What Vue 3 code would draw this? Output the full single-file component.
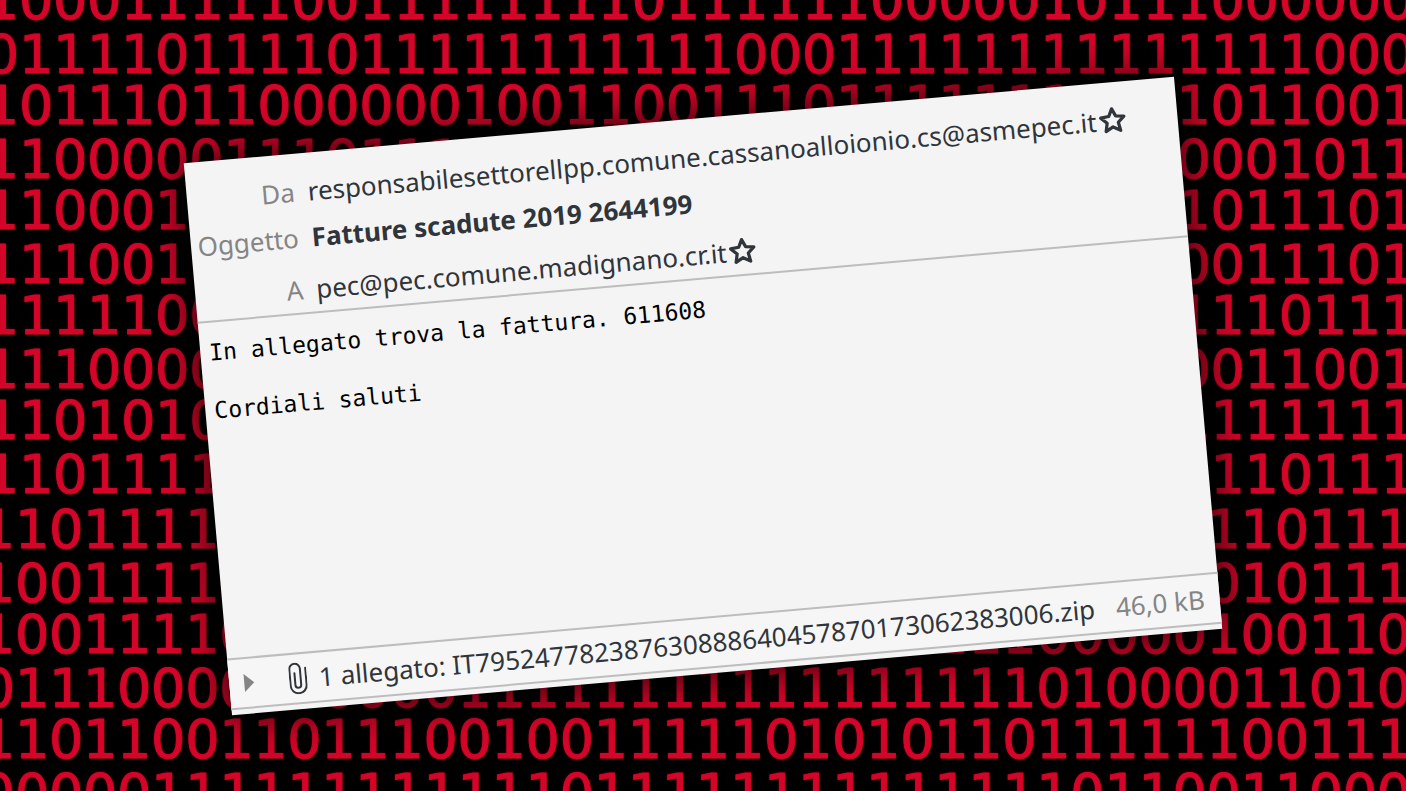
<template>
	<main class="stage">
		<div class="wall" aria-hidden="true">
			<div v-for="(block, b) in blocks" :key="b" class="block">
				<div v-for="(row, r) in block" :key="r" class="digits">
					<span v-for="(digit, d) in row" :key="d">{{ digit }}</span>
				</div>
			</div>
		</div>

		<article class="mail">
			<header class="mail-head">
				<div v-for="field in fields" :key="field.label" class="field">
					<span class="label">{{ field.label }}</span>
					<h1 v-if="field.subject" class="subject">{{ field.value }}</h1>
					<span v-else class="address">{{ field.value }}</span>
					<button v-if="!field.subject" type="button" class="star" :class="{ starred: starred[field.label] }"
						:aria-label="'Contatto ' + field.value" @click="starred[field.label] = !starred[field.label]">
						<svg viewBox="0 0 26 26">
							<path d="M13 2.4 L16.2 9.2 L23.8 10.1 L18.2 15.3 L19.8 23 L13 19.2 L6.2 23 L7.8 15.3 L2.2 10.1 L9.8 9.2 Z" />
						</svg>
					</button>
				</div>
			</header>

			<section class="mail-body">
				<p>In allegato trova la fattura. 611608</p>
				<p>Cordiali saluti</p>
			</section>

			<footer class="attachments">
				<button type="button" class="expander" aria-label="Mostra allegati">
					<svg viewBox="0 0 12 20"><path d="M1 1 L11 10 L1 19 Z" /></svg>
				</button>
				<svg class="clip" viewBox="0 0 18 32">
					<path d="M17 6 V23 A8 8 0 0 1 1 23 V6.5 A5.3 5.3 0 0 1 11.6 6.5 V22.5 A2.9 2.9 0 0 1 5.8 22.5 V10.5" />
				</svg>
				<span class="file">1 allegato: <a href="#">{{ fileName }}</a></span>
				<span class="size">46,0 kB</span>
			</footer>
		</article>
	</main>
</template>

<script setup>
import { reactive } from 'vue'

const fileName = 'IT795247782387630888640457870173062383006.zip'

const starred = reactive({})

const fields = [
	{ label: 'Da', value: 'responsabilesettorellpp.comune.cassanoalloionio.cs@asmepec.it' },
	{ label: 'Oggetto', value: 'Fatture scadute 2019 2644199', subject: true },
	{ label: 'A', value: 'pec@pec.comune.madignano.cr.it' },
]

const ones = (n) => '1'.repeat(n)

const blocks = [
	[
		'100011111001111' + '1111' + '0' + '111111' + '00000' + '10111000000',
		'01111011110' + ones(11) + '000' + ones(14) + '000',
		'10111011000000' + '10011001110' + ones(11) + '011001',
		'1100000111011' + ones(22) + '0001011',
		'110001' + ones(29) + '1011101',
		'111001' + ones(29) + '0011101',
		'1111100' + ones(28) + '1110111',
		'1110000' + ones(28) + '0011001',
		'1101010' + ones(28) + '1111111',
		'1101111' + ones(28) + '1110111',
	],
	[
		'1101111' + ones(28) + '1110111',
		'1001111' + ones(28) + '0010111',
		'10011110' + ones(23) + '00000100110',
		'01110000000000' + ones(17) + '01000011010',
		'110110011011100' + '1001111101010' + '11011111100111',
		'00000' + ones(12) + '0' + ones(14) + '0110011000',
	],
]
</script>

<style>
body {
	background: #000;
}
</style>

<style scoped>
.stage {
	display: grid;
	grid-template: 100vh / 100%;
	align-items: center;
	justify-items: center;
	overflow: hidden;
	background: #000;
}

.wall,
.mail {
	grid-area: 1 / 1;
}

/* falling-code wallpaper */
.wall {
	align-self: start;
	justify-self: start;
	width: calc(100% + 24px);
	margin: -26px 0 0 -15px;
	font: 54px/54px "DejaVu Sans", sans-serif;
	color: #d50529;
	-webkit-text-stroke: 1px #d50529;
	text-shadow: 0 0 3px #8c0018;
	user-select: none;
}

.block + .block {
	margin: 4px 4px 0 -4px;
}

.digits {
	display: grid;
	grid-template-columns: repeat(42, 1fr);
	height: 54px;
}

.digits:nth-child(even) {
	height: 51px;
}

.digits span {
	display: flex;
	justify-content: center;
	min-width: 0;
}

/* message window */
.mail {
	position: relative;
	box-sizing: border-box;
	width: calc(100% - 412px);
	padding-bottom: 5px;
	background: #f4f4f4;
	color: #30353b;
	font: 26px/36px "Noto Sans", sans-serif;
	white-space: nowrap;
	box-shadow: 0 0 40px 4px rgba(0, 0, 0, 0.8);
	transform: rotate(-5deg);
}

.mail-head {
	display: grid;
	gap: 10px;
	padding: 20px 0 5px;
	border-bottom: 2px solid #bdbdbd;
}

.field {
	display: grid;
	grid-template-columns: 108px auto auto 1fr;
	align-items: center;
}

.field:last-child {
	margin-top: 6px;
}

.label {
	text-align: right;
	color: #858585;
}

.address,
.subject {
	margin: 0 0 0 13px;
	font: inherit;
}

.subject {
	font-weight: bold;
}

.star,
.expander {
	display: flex;
	padding: 0;
	border: 0;
	background: none;
	cursor: pointer;
}

.star {
	margin-left: 2px;
}

.star svg {
	width: 28px;
	height: 28px;
	fill: none;
	stroke: #30353b;
	stroke-width: 3;
	stroke-linejoin: round;
}

.starred svg {
	fill: #f5c211;
}

.mail-body {
	min-height: 320px;
	padding: 16px 9px 0;
	color: #000;
	font: 23px/29px "DejaVu Sans Mono", monospace;
}

.mail-body p {
	margin: 0 0 29px;
}

.attachments {
	display: flex;
	align-items: center;
	height: 48px;
	padding: 0 15px 0 14px;
	border-top: 2px solid #bdbdbd;
	border-bottom: 2px solid #bdbdbd;
	background: #f6f6f6;
}

.expander svg {
	width: 12px;
	height: 20px;
	fill: #858585;
}

.clip {
	width: 18px;
	height: 32px;
	margin: 0 12px 0 34px;
	fill: none;
	stroke: #30353b;
	stroke-width: 2;
	stroke-linecap: round;
}

.file a {
	color: inherit;
	text-decoration: none;
}

.size {
	margin-left: auto;
	color: #858585;
}
</style>
